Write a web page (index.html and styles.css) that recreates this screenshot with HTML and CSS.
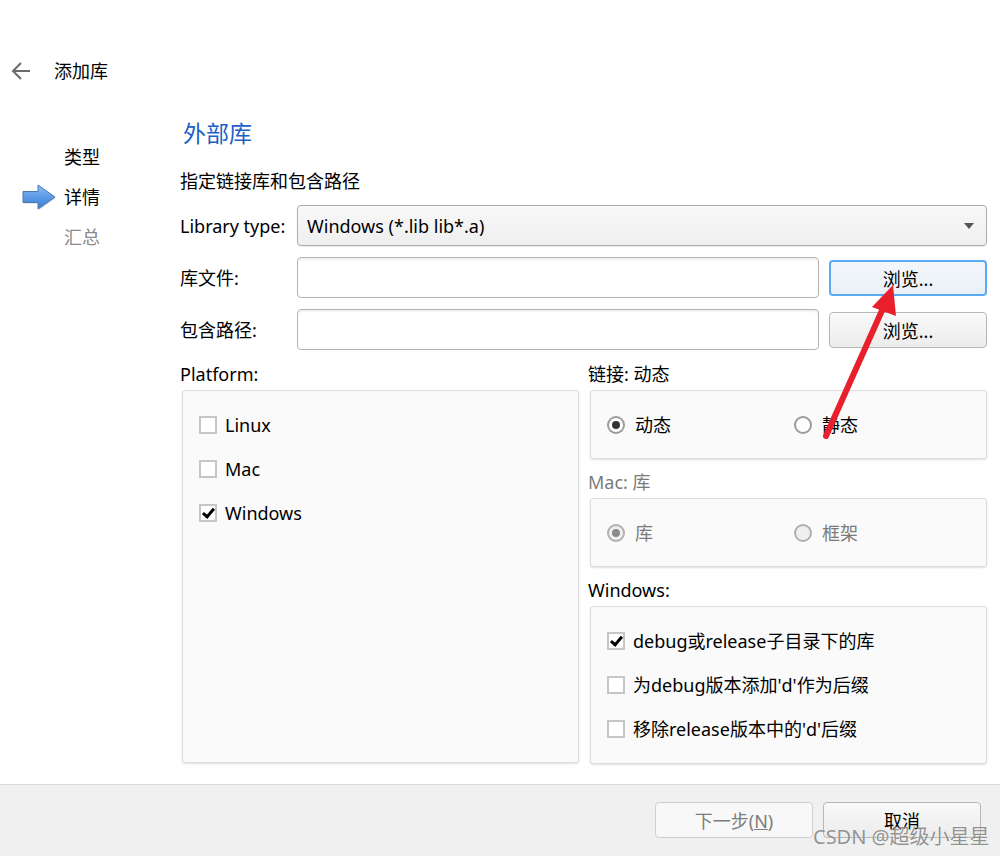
FILE: index.html
```html
<!DOCTYPE html>
<html lang="zh-CN">
<head>
  <meta charset="UTF-8">
  <title>添加库</title>
  <link rel="stylesheet" href="styles.css">
</head>
<body>
  <div class="topbar">
    <svg class="back" width="20" height="20" viewBox="0 0 20 20">
      <path d="M19 10H2M10 2L2 10L10 18" fill="none" stroke="#6b6b6b" stroke-width="2"/>
    </svg>
    <span class="topbar-title">添加库</span>
  </div>

  <div class="main">
    <nav class="steps">
      <div class="step"><span class="step-icon"></span>类型</div>
      <div class="step current">
        <span class="step-icon">
          <svg width="36" height="28" viewBox="0 0 36 28">
            <defs>
              <linearGradient id="ag" x1="0" y1="0" x2="0" y2="1">
                <stop offset="0" stop-color="#8ec0f5"/>
                <stop offset="0.5" stop-color="#5b9be6"/>
                <stop offset="1" stop-color="#3c7bd2"/>
              </linearGradient>
            </defs>
            <path d="M2 8.5H17V2L34 14L17 26V19.5H2Z" fill="#7d8fa8" opacity="0.35" transform="translate(1 1)"/>
            <path d="M2 8.5H17V2L34 14L17 26V19.5H2Z" fill="url(#ag)" stroke="#4b76b3" stroke-width="1"/>
          </svg>
        </span>详情</div>
      <div class="step muted"><span class="step-icon"></span>汇总</div>
    </nav>

    <section class="page">
      <h2 class="page-title">外部库</h2>
      <p class="desc">指定链接库和包含路径</p>

      <div class="form">
        <label class="lbl">Library type:</label>
        <div class="combo">
          <span>Windows (*.lib lib*.a)</span>
          <span class="caret"></span>
        </div>

        <label class="lbl">库文件:</label>
        <div class="field"></div>
        <button class="btn hot">浏览...</button>

        <label class="lbl">包含路径:</label>
        <div class="field"></div>
        <button class="btn">浏览...</button>
      </div>

      <div class="groups">
        <div class="col">
          <div class="group tall">
            <div class="group-label">Platform:</div>
            <div class="box">
              <div class="check"><span class="cb"></span>Linux</div>
              <div class="check"><span class="cb"></span>Mac</div>
              <div class="check"><span class="cb on"></span>Windows</div>
            </div>
          </div>
        </div>

        <div class="col">
          <div class="group">
            <div class="group-label">链接: 动态</div>
            <div class="box radios">
              <div class="radio"><span class="rb on"></span>动态</div>
              <div class="radio"><span class="rb"></span>静态</div>
            </div>
          </div>
          <div class="group disabled">
            <div class="group-label">Mac: 库</div>
            <div class="box radios">
              <div class="radio"><span class="rb on"></span>库</div>
              <div class="radio"><span class="rb"></span>框架</div>
            </div>
          </div>
          <div class="group tall">
            <div class="group-label">Windows:</div>
            <div class="box">
              <div class="check"><span class="cb on"></span>debug或release子目录下的库</div>
              <div class="check"><span class="cb"></span>为debug版本添加'd'作为后缀</div>
              <div class="check"><span class="cb"></span>移除release版本中的'd'后缀</div>
            </div>
          </div>
        </div>
      </div>
    </section>
  </div>

  <footer class="footer">
    <button class="btn wide" disabled>下一步(<u>N</u>)</button>
    <button class="btn wide">取消</button>
  </footer>

  <svg class="annot" width="1000" height="856" viewBox="0 0 1000 856">
    <path d="M826 436L884 306" stroke="#e8202b" stroke-width="6" stroke-linecap="round" fill="none"/>
    <path d="M893 285L872 307L896 316Z" fill="#e8202b"/>
  </svg>
  <div class="watermark">CSDN @超级小星星</div>
</body>
</html>
```

FILE: styles.css
```css
* {
  box-sizing: border-box;
}

body {
  margin: 0;
  width: 1000px;
  height: 856px;
  overflow: hidden;
  position: relative;
  display: flex;
  flex-direction: column;
  background: #fff;
  color: #000;
  font-family: "Noto Sans", "Noto Sans CJK SC", sans-serif;
  font-size: 18px;
  line-height: 24px;
}

.topbar {
  margin-top: 52px;
  height: 38px;
  flex-shrink: 0;
  display: flex;
  align-items: center;
  padding-left: 11px;
}

.back {
  margin-right: 23px;
}

.main {
  flex: 1;
  min-height: 0;
  display: flex;
}

.steps {
  width: 180px;
  padding-top: 47px;
}

.step {
  height: 40px;
  display: flex;
  align-items: center;
  padding-left: 21px;
}

.step-icon {
  width: 43px;
  display: flex;
  align-items: center;
}

.step.muted {
  color: #8a8a8a;
}

.page {
  flex: 1;
  padding-right: 13px;
}

.page-title {
  margin: 28px 0 0 3px;
  font-size: 23px;
  font-weight: normal;
  line-height: 30px;
  color: #2160c4;
}

.desc {
  margin: 21px 0 12px 0;
  line-height: 24px;
}

.form {
  display: grid;
  grid-template-columns: 107px 1fr 158px;
  grid-auto-rows: 41px;
  column-gap: 10px;
  row-gap: 11px;
}

.lbl {
  display: flex;
  align-items: center;
}

.combo {
  grid-column: 2 / 4;
  display: flex;
  align-items: center;
  justify-content: space-between;
  padding: 0 12px 0 9px;
  border: 1px solid #acacac;
  border-radius: 4px;
  background: linear-gradient(#f8f8f8, #efefef);
  box-shadow: 0 1px 1px rgba(0, 0, 0, 0.08);
}

.caret {
  width: 0;
  height: 0;
  border-left: 5px solid transparent;
  border-right: 5px solid transparent;
  border-top: 6px solid #555;
}

.field {
  border: 1px solid #b4b4b4;
  border-radius: 4px;
  background: #fff;
  box-shadow: inset 0 2px 2px rgba(0, 0, 0, 0.06);
}

.btn {
  align-self: center;
  height: 36px;
  font-family: inherit;
  font-size: 18px;
  color: #000;
  border: 1px solid #b7b7b7;
  border-radius: 4px;
  background: linear-gradient(#f9f9f9, #ececec);
  padding: 0;
}

.btn.hot {
  border: 2px solid #58aaf2;
  background: linear-gradient(#f3f7fb, #e9f0f7);
}

.groups {
  margin-top: 12px;
  display: grid;
  grid-template-columns: 399px 399px;
  column-gap: 9px;
}

.col {
  display: flex;
  flex-direction: column;
  gap: 11px;
}

.group {
  display: flex;
  flex-direction: column;
}

.group.tall {
  flex: 1;
}

.group-label {
  line-height: 24px;
  margin-bottom: 4px;
}

.box {
  margin-left: 2px;
  border: 1px solid #dcdcdc;
  border-radius: 3px;
  background: #fafafa;
  box-shadow: 0 1px 2px rgba(0, 0, 0, 0.12);
  padding: 12px 0 12px 16px;
}

.group.tall .box {
  height: 373px;
}

.col:last-child .group.tall .box {
  height: 158px;
}

.check {
  height: 44px;
  display: flex;
  align-items: center;
}

.cb {
  width: 18px;
  height: 18px;
  margin-right: 8px;
  border: 2px solid #c6c6c6;
  background: #fff;
  position: relative;
}

.cb.on::after {
  content: "";
  position: absolute;
  left: 4px;
  top: 0px;
  width: 4px;
  height: 9px;
  border-right: 3px solid #000;
  border-bottom: 3px solid #000;
  transform: rotate(40deg);
}

.radios {
  display: grid;
  grid-template-columns: 187px 1fr;
  height: 69px;
  align-items: center;
  padding-top: 0;
  padding-bottom: 0;
}

.radio {
  display: flex;
  align-items: center;
}

.rb {
  width: 18px;
  height: 18px;
  margin-right: 10px;
  border: 2px solid #9c9c9c;
  border-radius: 50%;
  background: #fff;
  display: flex;
  align-items: center;
  justify-content: center;
}

.rb.on::after {
  content: "";
  width: 8px;
  height: 8px;
  border-radius: 50%;
  background: #333;
}

.group.disabled {
  color: #7a7a7a;
}

.group.disabled .rb {
  border-color: #b0b0b0;
  background: #efefef;
}

.group.disabled .rb.on::after {
  background: #8a8a8a;
}

.footer {
  height: 72px;
  flex-shrink: 0;
  border-top: 1px solid #dadada;
  background: #f0f0f0;
  display: flex;
  justify-content: flex-end;
  align-items: flex-start;
  gap: 10px;
  padding: 17px 19px 0 0;
}

.footer .btn {
  align-self: flex-start;
}

.btn.wide {
  width: 158px;
}

.btn[disabled] {
  color: #7d7d7d;
  border-color: #cfcfcf;
  background: #f8f8f8;
}

.annot {
  position: absolute;
  left: 0;
  top: 0;
  pointer-events: none;
}

.watermark {
  position: absolute;
  left: 813px;
  top: 825px;
  font-size: 20px;
  color: rgba(110, 110, 110, 0.75);
  text-shadow: 0 0 1px #fff;
  pointer-events: none;
}
```
